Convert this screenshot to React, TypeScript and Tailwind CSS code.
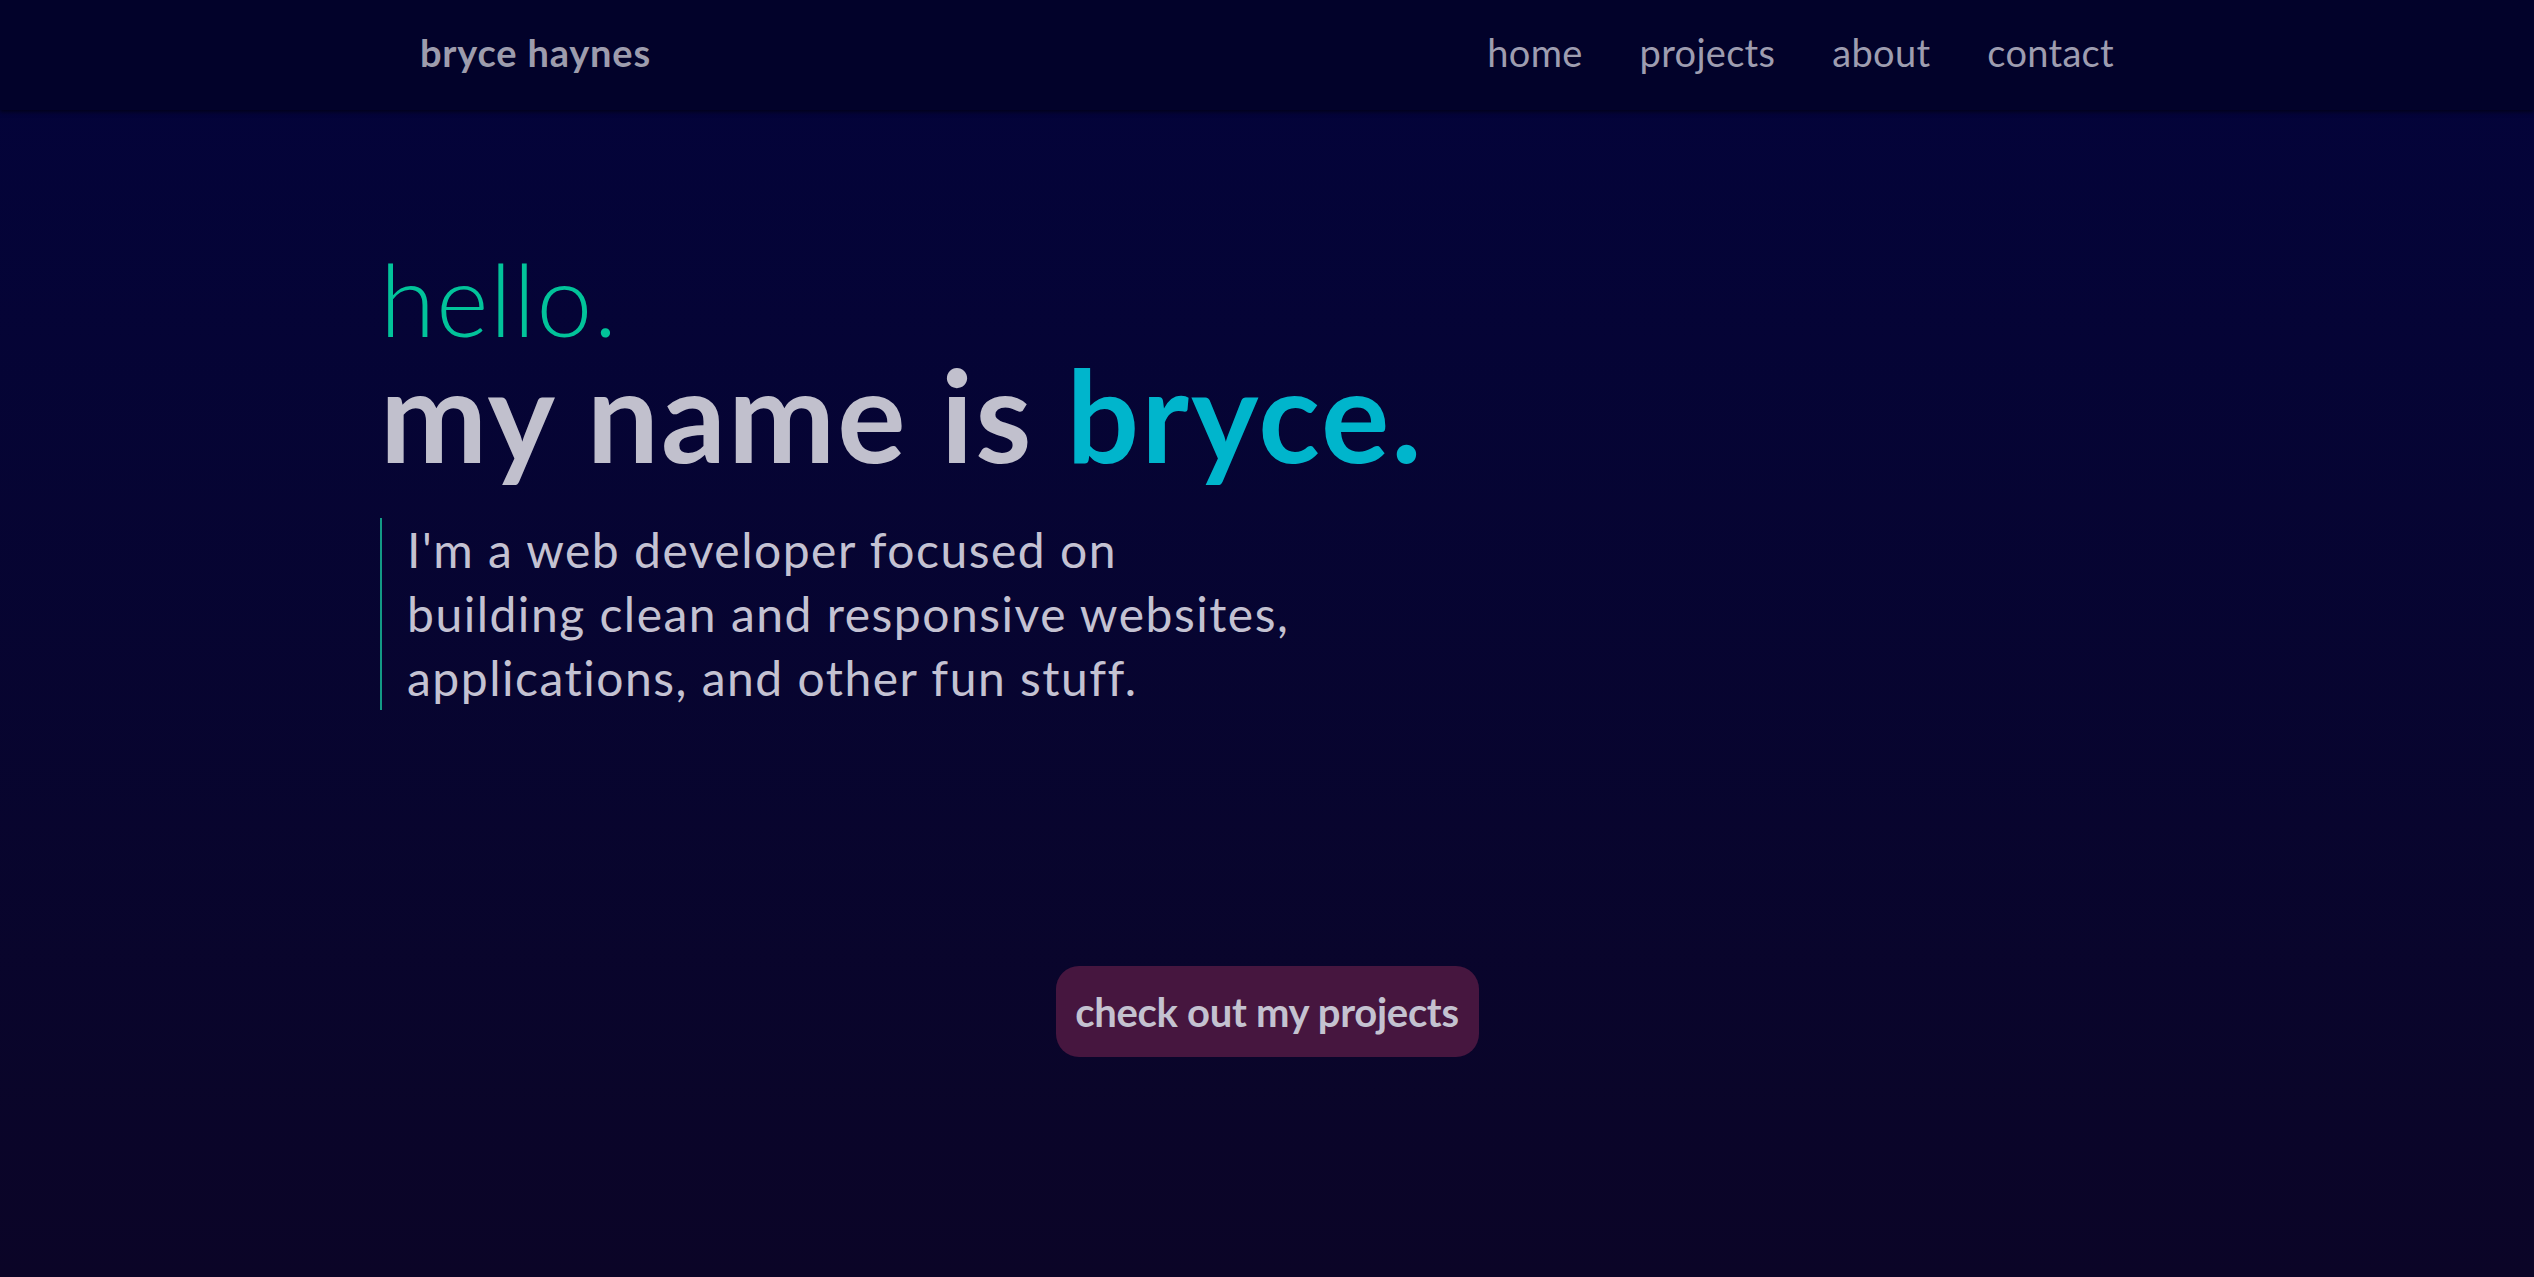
import React from "react";

export default function App() {
  const font = { fontFamily: "Lato, 'Noto Sans', sans-serif" };
  return (
    <div
      className="min-h-[1277px] w-full flex flex-col bg-gradient-to-b from-[#03033b] to-[#0b0527]"
      style={font}
    >
      <header className="relative z-10 h-[110px] w-full bg-[#02022a] shadow-[0_2px_4px_rgba(0,0,0,0.55)] flex items-center pb-[6px]">
        <div className="mx-auto w-[1694px] flex items-center justify-between">
          <a className="text-[38px] leading-[38px] font-bold text-[#9d9cad] tracking-[0.8px]">
            bryce haynes
          </a>
          <nav className="flex items-center gap-[57px] text-[38px] leading-[38px] text-[#9e9db0] tracking-[0.3px]">
            <a>home</a>
            <a>projects</a>
            <a>about</a>
            <a>contact</a>
          </nav>
        </div>
      </header>

      <main className="flex-1 flex flex-col">
        <section className="mx-auto w-[1774px] pt-[138px] flex flex-col">
          <h2 className="text-[100px] leading-[100px] font-light text-[#02c39a] tracking-[1.3px]">
            hello.
          </h2>
          <h1 className="mt-[2px] text-[128px] leading-[128px] font-bold text-[#c1c0cd] tracking-[2px]">
            my name is <span className="text-[#00b5cc]">bryce.</span>
          </h1>
          <p className="mt-[40px] border-l-2 border-[#139a85] pl-[25px] text-[48px] leading-[64px] text-[#c4c2d2] tracking-[1.5px] w-[1000px]">
            I'm a web developer focused on
            <br />
            building clean and responsive websites,
            <br />
            applications, and other fun stuff.
          </p>
        </section>

        <div className="mt-[256px] flex justify-center">
          <button className="h-[91px] w-[423px] rounded-[23px] bg-[#46163f] text-[40px] font-bold text-[#c4c2d0] tracking-[-0.3px] flex items-center justify-center">
            check out my projects
          </button>
        </div>
      </main>
    </div>
  );
}
